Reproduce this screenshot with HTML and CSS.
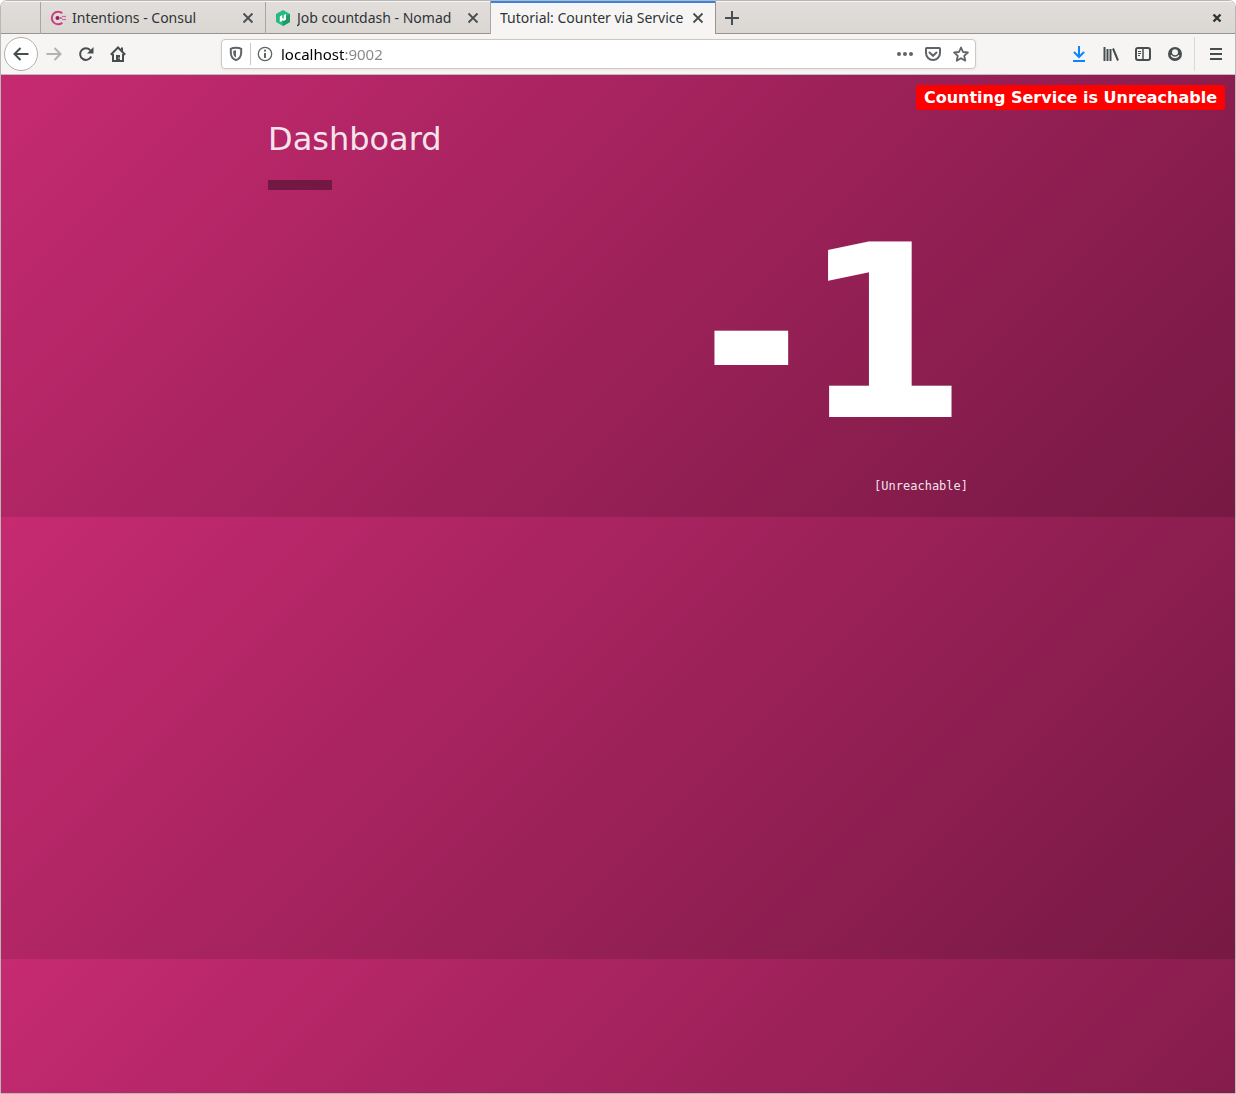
FILE: index.html
```html
<!DOCTYPE html>
<html lang="en">
<head>
<meta charset="utf-8">
<meta name="viewport" content="width=device-width, initial-scale=1">
<title>Tutorial: Counter via Service</title>
<link rel="stylesheet" href="styles.css">
</head>
<body>
<div class="window">
  <div class="tabbar">
    <div class="tab">
      <svg class="icon" viewBox="0 0 16 16" fill="none"><path d="M12.300 12.700A6.300 6.300 0 1 1 12.300 3.300" stroke="#cc3d80" stroke-width="2"/><g fill="#cc3d80"><circle cx="7.500" cy="8" r="2" fill="#961d59"/><circle cx="10.900" cy="8" r=".9"/><circle cx="12.900" cy="6.500" r=".8"/><circle cx="12.900" cy="9.500" r=".8"/><circle cx="15" cy="6.500" r=".8"/><circle cx="15" cy="9.500" r=".8"/></g></svg>
      <span class="tab-title">Intentions - Consul</span>
      <button class="close" aria-label="Close tab"><svg class="icon" viewBox="0 0 16 16"><path d="M3.500 3.500l9 9M12.500 3.500l-9 9"/></svg></button>
    </div>
    <div class="tab">
      <svg class="icon" viewBox="0 0 16 16"><path d="M8 0l7 4v8l-7 4-7-4V4z" fill="#25ba81"/><path d="M8 8l7-4v8l-7 4z" fill="#1f9967"/><path d="M4.800 12V6.500L7.200 5v3l1.500.8V5.200L11 4v5.400L8.600 11 7.100 10v.9z" fill="#fff"/></svg>
      <span class="tab-title">Job countdash - Nomad</span>
      <button class="close" aria-label="Close tab"><svg class="icon" viewBox="0 0 16 16"><path d="M3.500 3.500l9 9M12.500 3.500l-9 9"/></svg></button>
    </div>
    <div class="tab tab-active">
      <span class="tab-title">Tutorial: Counter via Service</span>
      <button class="close" aria-label="Close tab"><svg class="icon" viewBox="0 0 16 16"><path d="M3.500 3.500l9 9M12.500 3.500l-9 9"/></svg></button>
    </div>
    <button class="tool" aria-label="New tab"><svg class="icon" viewBox="0 0 16 16"><path d="M8 1v14M1 8h14"/></svg></button>
    <button class="tool window-close" aria-label="Close window"><svg class="icon" viewBox="0 0 16 16"><path d="M4.500 4.500l7 7M11.500 4.500l-7 7" stroke-width="2.400"/></svg></button>
  </div>

  <div class="toolbar">
    <button class="tool back" aria-label="Back"><svg class="icon" viewBox="0 0 16 16"><path d="M15.500 8H1.500M7.500 2L1.500 8l6 6"/></svg></button>
    <button class="tool" aria-label="Forward" disabled><svg class="icon" viewBox="0 0 16 16"><path d="M.5 8h14M8.500 2l6 6-6 6"/></svg></button>
    <button class="tool" aria-label="Reload"><svg class="icon" viewBox="0 0 16 16"><path d="M13.200 10.500A5.800 5.800 0 1 1 12.500 4.500"/><path d="M15.500 1v6.500H9z" class="solid"/></svg></button>
    <button class="tool" aria-label="Home"><svg class="icon" viewBox="0 0 16 16"><path d="M.8 8.700L8 1.500l7.200 7.200M3 8v7h10V8"/><path d="M6 9h4v6H6z" class="solid"/><path d="M11 1.500h2v4h-2z" class="solid"/><path d="M8.500 11.500h1v1.200h-1z" fill="#fff" stroke="none"/></svg></button>
    <form class="urlbar">
      <button type="button" class="mini" aria-label="Tracking protection"><svg class="icon" viewBox="0 0 16 16"><path d="M8 1.800c2 0 4 .3 5.200 1v3.700c0 3.700-1.800 6.300-5.200 7.700-3.400-1.400-5.200-4-5.200-7.700V2.800C4 2.100 6 1.800 8 1.800z"/><path d="M8 4.300v7.300c-1.900-1.100-2.800-2.900-2.800-5.100V4.700z" class="solid"/></svg></button>
      <span class="divider"></span>
      <button type="button" class="mini" aria-label="Site information"><svg class="icon" viewBox="0 0 16 16"><circle cx="8" cy="8" r="6.700" stroke-width="1.300"/><path d="M8 7v5"/><circle cx="8" cy="4.700" r="1.100" class="solid"/></svg></button>
      <input class="address" type="text" aria-label="Address" value="localhost:9002" spellcheck="false">
      <button type="button" class="mini" aria-label="Page actions"><svg class="icon" viewBox="0 0 16 16"><g class="solid"><circle cx="2" cy="8" r="2"/><circle cx="8" cy="8" r="2"/><circle cx="14" cy="8" r="2"/></g></svg></button>
      <button type="button" class="mini" aria-label="Save to Pocket"><svg class="icon" viewBox="0 0 16 16"><path d="M1.700 2h12.600q.7 0 .7.700V7a7 7 0 0 1-14 0V2.700Q1 2 1.700 2z"/><path d="M4.500 6.500L8 9.800l3.500-3.300" stroke-linecap="round"/></svg></button>
      <button type="button" class="mini" aria-label="Bookmark"><svg class="icon" viewBox="0 0 16 16"><path d="M8 1.500l2 4.500 4.900.5-3.700 3.300 1.100 4.900L8 12.200l-4.300 2.500 1.100-4.900L1.100 6.500 6 6z" stroke-width="1.800" stroke-linejoin="round"/></svg></button>
    </form>
    <button class="tool download" aria-label="Downloads"><svg class="icon" viewBox="0 0 16 16"><path d="M8 .5v10.300M3.500 6.500L8 11l4.500-4.500" stroke-linecap="round"/><path d="M2 15h12"/></svg></button>
    <button class="tool" aria-label="Library"><svg class="icon" viewBox="0 0 16 16"><path d="M1.500 1v14M4.500 3v12M7.500 3v12M10 2.500L15 14.500"/></svg></button>
    <button class="tool" aria-label="Sidebars"><svg class="icon" viewBox="0 0 16 16"><rect x="1" y="2" width="14" height="12" rx="2"/><path d="M8 2v12" stroke-width="1.500"/><path d="M3 5.500h3M3 7.500h3M3 9.500h2" stroke-width="1"/></svg></button>
    <button class="tool" aria-label="Account"><svg class="icon" viewBox="0 0 16 16"><circle cx="8" cy="8" r="7" class="solid"/><circle cx="8" cy="6.200" r="3" fill="#f6f5f4" stroke="none"/><path d="M4 9.300c1.300 2.900 6.700 2.900 8 0" stroke="#f6f5f4" stroke-width="1.300"/></svg></button>
    <span class="rule"></span>
    <button class="tool menu" aria-label="Menu"><svg class="icon" viewBox="0 0 16 16"><path d="M2 3h12M2 8h12M2 13h12"/></svg></button>
  </div>

  <main class="page">
    <div class="status">Counting Service is Unreachable</div>
    <div class="container">
      <h1 class="heading">Dashboard</h1>
      <div class="count">-1</div>
      <div class="host">[Unreachable]</div>
    </div>
  </main>
</div>
</body>
</html>
```
FILE: styles.css
```css
* { box-sizing: border-box; }

body {
  margin: 0;
  background: #fff;
  font-family: "Noto Sans", "Open Sans", sans-serif;
  color: #2e3436;
}

.window {
  display: flex;
  flex-direction: column;
  min-height: 100vh;
  border: 1px solid #bab8b6;
  border-radius: 7px 7px 0 0;
  overflow: hidden;
}

button {
  display: flex;
  align-items: center;
  justify-content: center;
  padding: 0;
  border: 0;
  background: none;
  color: #484e50;
}

.icon {
  flex: none;
  width: 16px;
  height: 16px;
}

button .icon {
  fill: none;
  stroke: currentColor;
  stroke-width: 2;
}

button .solid {
  fill: currentColor;
  stroke: none;
}

/* Tabs */
.tabbar {
  display: flex;
  height: 33px;
  padding-left: 39px;
  background: linear-gradient(#e1dedb, #dad6d2);
  border-top: 1px solid #f6f5f4;
  box-shadow: inset 0 -1px #979491;
}

.tab {
  display: flex;
  align-items: center;
  gap: 6px;
  width: 225px;
  padding: 0 9px;
  border-left: 1px solid #a9a5a2;
}

.tab-active {
  width: 226px;
  margin-top: -1px;
  border-right: 1px solid #979491;
  background: #f6f5f4;
  box-shadow: inset 0 2px #3584e4;
}

.tab-title {
  flex: 1;
  overflow: hidden;
  font-size: 14px;
  line-height: 20px;
  white-space: nowrap;
}

.close .icon { stroke-width: 1.8; }

.tool {
  width: 32px;
  height: 32px;
}

.tool:disabled { color: #b2b2b1; }

.window-close {
  margin-left: auto;
  margin-right: 2px;
  color: #2e3436;
}

/* Navigation */
.toolbar {
  display: flex;
  align-items: center;
  height: 41px;
  padding: 0 3px;
  background: #f6f5f4;
  border-bottom: 1px solid #bfbcb9;
}

.back {
  width: 34px;
  height: 34px;
  border: 1px solid #b1afad;
  border-radius: 50%;
  background: #fff;
}

.urlbar {
  display: flex;
  flex: 1;
  align-items: center;
  height: 30px;
  margin: 0 87px;
  border: 1px solid #cdc7c2;
  border-radius: 4px;
  background: #fff;
  box-shadow: 0 1px 3px #00000010;
}

.mini {
  width: 28px;
  height: 28px;
  color: #606466;
}

.divider {
  width: 1px;
  height: 22px;
  background: #cdc7c2;
}

.address {
  flex: 1;
  min-width: 0;
  height: 24px;
  padding: 0 0 0 2px;
  border: 0;
  outline: 0;
  color: #000;
  font: 15px/24px "Noto Sans", "Open Sans", sans-serif;
  /* the host is black, the port after it is grey */
  background: linear-gradient(90deg, #000 65px, #868686 65px);
  background-clip: text;
  -webkit-background-clip: text;
  -webkit-text-fill-color: transparent;
}

.download { color: #0a84ff; }

.rule {
  width: 1px;
  height: 34px;
  margin: 0 5px 0 3px;
  background: #dbd9d6;
}

/* Dashboard page */
.page {
  position: relative;
  flex: 1;
  padding-top: 45px;
  background: linear-gradient(135deg, #c62a71, #761943) 0 0 / 100% 442px;
  color: #ffffffe6;
  font-family: "DejaVu Sans", sans-serif;
}

.status {
  position: absolute;
  top: 10px;
  right: 10px;
  padding: 3px 8px 2px;
  border-radius: 3px;
  background: #f00;
  color: #fff;
  font-size: 16px;
  font-weight: 700;
  line-height: 20px;
}

.container {
  max-width: 700px;
  margin: 0 auto;
}

.heading {
  margin: 0;
  font-size: 32px;
  font-weight: 400;
  line-height: 38px;
}

.heading::after {
  content: "";
  display: block;
  width: 64px;
  height: 10px;
  margin-top: 22px;
  background: #731843;
}

.count {
  margin-top: 24px;
  color: #fff;
  font-size: 240px;
  font-weight: 700;
  line-height: 240px;
  text-align: right;
}

.host {
  margin-top: 25px;
  font-family: "DejaVu Sans Mono", monospace;
  font-size: 12px;
  line-height: 14px;
  text-align: right;
}
```
